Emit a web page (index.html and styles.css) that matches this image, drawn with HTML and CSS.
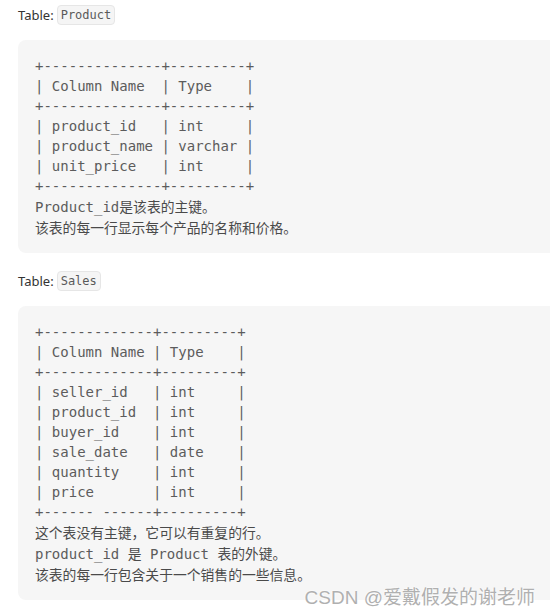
FILE: index.html
```html
<!DOCTYPE html>
<html lang="zh">
<head>
<meta charset="utf-8">
<link rel="stylesheet" href="styles.css">
</head>
<body>
<div class="page">
  <p class="label label-first">Table: <code class="inline">Product</code></p>
  <pre class="block">+--------------+---------+
| Column Name  | Type    |
+--------------+---------+
| product_id   | int     |
| product_name | varchar |
| unit_price   | int     |
+--------------+---------+
Product_id<span class="zh">是该表的主键。</span>
<span class="zh">该表的每一行显示每个产品的名称和价格。</span></pre>
  <p class="label label-second">Table: <code class="inline">Sales</code></p>
  <pre class="block">+-------------+---------+
| Column Name | Type    |
+-------------+---------+
| seller_id   | int     |
| product_id  | int     |
| buyer_id    | int     |
| sale_date   | date    |
| quantity    | int     |
| price       | int     |
+------ ------+---------+
<span class="zh">这个表没有主键，它可以有重复的行。</span>
product_id <span class="zh">是</span> Product <span class="zh">表的外键。</span>
<span class="zh">该表的每一行包含关于一个销售的一些信息。</span></pre>
  <div class="watermark">CSDN @爱戴假发的谢老师</div>
</div>
</body>
</html>
```

FILE: styles.css
```css
html, body {
  margin: 0;
  padding: 0;
  overflow: hidden;
  background: #ffffff;
}

.page {
  position: relative;
  padding: 4px 0 0 18px;
  height: 609px;
}

.label {
  margin: 0;
  font-family: "Noto Sans", "Noto Sans CJK SC", sans-serif;
  font-size: 13px;
  line-height: 22px;
  color: #333333;
  display: flex;
  align-items: center;
  gap: 3px;
}

.inline {
  font-family: "DejaVu Sans Mono", monospace;
  font-size: 12px;
  line-height: 18px;
  padding: 0 3px;
  color: #5a5a5a;
  background: #f5f5f5;
  border: 1px solid #e6e6e6;
  border-radius: 4px;
}

.block {
  margin: 14px -40px 0 0;
  padding: 16px 17px 15px;
  background: #f6f6f6;
  border-radius: 8px;
  font-family: "DejaVu Sans Mono", monospace;
  font-size: 14px;
  line-height: 20px;
  color: #5c5c5c;
  white-space: pre;
}

.block + .label {
  margin-top: 17px;
}

.label + .block {
  margin-top: 14px;
}

.zh {
  font-family: "Noto Sans CJK SC", sans-serif;
  font-size: 13.8px;
  line-height: 20px;
  color: #4a4a4a;
}

.watermark {
  position: absolute;
  right: 15px;
  top: 586px;
  font-family: "Liberation Sans", "Noto Sans CJK SC", sans-serif;
  font-size: 19px;
  line-height: 24px;
  color: #b0b0b0;
  text-shadow: 0 0 2px #ffffff, 0 0 2px #ffffff;
}
```
